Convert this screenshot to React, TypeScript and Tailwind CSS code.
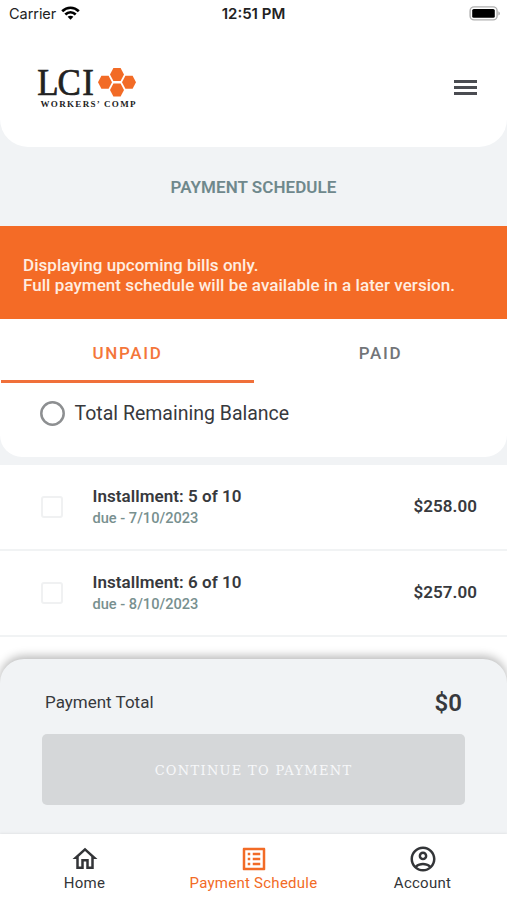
import React from 'react';

const rows = [
  { title: 'Installment: 5 of 10', due: 'due - 7/10/2023', amount: '$258.00' },
  { title: 'Installment: 6 of 10', due: 'due - 8/10/2023', amount: '$257.00' },
];

function StatusBar() {
  return (
    <div className="grid h-7 grid-cols-3 items-center px-[9px] font-[Inter,sans-serif] text-[14.5px] text-[#222]">
      <div className="flex items-center gap-[5px]">
        <span className="tracking-[-0.05px]">Carrier</span>
        <svg className="-mt-[2px]" width="19" height="15" viewBox="0 0 19 15" fill="none" stroke="#000" strokeWidth="2.7">
          <path d="M1.2 5.2C6 0.6 13 0.6 17.8 5.2" />
          <path d="M4.3 8.6C7.4 5.7 11.6 5.7 14.7 8.6" />
          <path d="M9.5 13.8L6.6 10.8C8.2 9.4 10.8 9.4 12.4 10.8Z" fill="#000" stroke="none" />
        </svg>
      </div>
      <div className="text-center text-[15px] font-semibold whitespace-nowrap">12:51 PM</div>
      <svg className="-mr-[3px] -mt-[2px] justify-self-end" width="32" height="15" viewBox="0 0 32 15">
        <rect x="1.1" y="0.9" width="27" height="13" rx="4" fill="#fff" stroke="#b0b0b0" strokeWidth="1.4" />
        <rect x="3.2" y="3" width="22.6" height="8.8" rx="1.6" fill="#000" />
        <path d="M29.4 5.2c2 .8 2 3.6 0 4.4z" fill="#aaa" />
      </svg>
    </div>
  );
}

function Logo() {
  const hex = '-7,0 -3.6,-6.5 3.6,-6.5 7,0 3.6,6.5 -3.6,6.5';
  return (
    <svg className="overflow-visible" width="102" height="44" viewBox="0 0 102 44">
      <g fill="#222" fontFamily="'Liberation Serif', serif">
        <text x="1.3 23.3 50.3" y="28.2" fontSize="38" stroke="#222" strokeWidth="0.7" transform="scale(0.92 1)">LCI</text>
        <text x="4.5" y="40" fontSize="9" fontWeight="700" textLength="95" lengthAdjust="spacing">WORKERS’ COMP</text>
      </g>
      <g fill="#f26b26">
        <polygon points={hex} transform="translate(81 7.5)" />
        <polygon points={hex} transform="translate(69 15.2)" />
        <polygon points={hex} transform="translate(93 15.2)" />
        <polygon points={hex} transform="translate(81 22.9)" />
      </g>
    </svg>
  );
}

function NavItem({ label, active, children }: { label: string; active?: boolean; children: React.ReactNode }) {
  return (
    <div className={`flex flex-1 flex-col items-center pt-[10px] ${active ? 'text-[#f26b26]' : 'text-[#333538]'}`}>
      <svg width="30" height="30" viewBox="0 0 24 24" fill="currentColor">{children}</svg>
      <span className="text-[15px] leading-[18px] tracking-[0.25px] whitespace-nowrap">{label}</span>
    </div>
  );
}

export default function App() {
  return (
    <div className="flex h-[900px] w-[507px] flex-col overflow-hidden bg-[#f1f3f5] font-[Roboto,sans-serif] text-[#37393d]">
      <header className="h-[147px] shrink-0 rounded-b-[28px] bg-white">
        <StatusBar />
        <div className="flex items-start justify-between pt-[39px] pr-[30px] pl-9">
          <Logo />
          <div className="mt-[13px] flex w-[23px] flex-col gap-[3px]">
            <div className="h-[3px] bg-[#4a4c51]" />
            <div className="h-[3px] bg-[#4a4c51]" />
            <div className="h-[3px] bg-[#4a4c51]" />
          </div>
        </div>
      </header>

      <h1 className="flex h-[79px] shrink-0 items-center justify-center pt-[2px] text-[17px] font-semibold tracking-[0.05px] text-[#6f888c]">PAYMENT SCHEDULE</h1>

      <div className="h-[93px] shrink-0 bg-[#f46b26] pt-[29px] pl-[23px] text-[17px] leading-5 font-medium tracking-[0.05px] whitespace-nowrap text-[#ffede0]">
        <p>Displaying upcoming bills only.</p>
        <p>Full payment schedule will be available in a later version.</p>
      </div>

      <section className="h-[138px] shrink-0 rounded-b-[22px] bg-white">
        <div className="flex h-16 text-[17px] font-medium tracking-[1.7px]">
          <div className="ml-[1px] flex w-[253px] items-center justify-center border-b-[3px] border-[#f0703a] pt-[9px] text-[#f4763a]">UNPAID</div>
          <div className="flex flex-1 items-center justify-center pt-[6px] text-[#727578]">PAID</div>
        </div>
        <div className="flex items-center pt-[18px] pl-10">
          <svg className="-mt-[1px]" width="25" height="25" viewBox="0 0 25 25">
            <circle cx="12.5" cy="12.5" r="11.2" fill="none" stroke="#8d8f91" strokeWidth="2.5" />
          </svg>
          <span className="ml-[9.5px] text-[19.5px] leading-[26px]">Total Remaining Balance</span>
        </div>
      </section>

      <main className="mt-2 h-[194px] shrink-0 bg-white">
        {rows.map((r) => (
          <div key={r.title} className="flex h-[86px] items-center border-b-2 border-[#f1f3f4] pr-[30px] pl-[41px]">
            <div className="size-[22px] rounded-[3px] border-2 border-[#f0f1f2]" />
            <div className="ml-[29.5px]">
              <div className="text-[17px] leading-[22px] font-semibold tracking-[0.05px]">{r.title}</div>
              <div className="text-[14.6px] leading-[22px] font-medium text-[#78908f]">{r.due}</div>
            </div>
            <div className="ml-auto text-[17px] font-semibold tracking-[0.05px]">{r.amount}</div>
          </div>
        ))}
      </main>

      <section className="h-[175px] shrink-0 bg-white">
        <div className="h-full rounded-t-[24px] bg-[#f1f3f5] px-[42px] shadow-[0_-3px_10px_rgba(0,0,0,0.28)]">
          <div className="flex h-[75px] items-center justify-between pt-3 pr-[3px] pl-[3px]">
            <span className="text-[17px]">Payment Total</span>
            <span className="text-[24px] font-semibold">$0</span>
          </div>
          <button className="flex h-[71px] w-full items-center justify-center rounded-[5px] bg-[#d5d7d9] pt-[2px] font-['DejaVu_Serif',serif] text-[13px] tracking-[1.3px] text-[#f7f8f9]">CONTINUE TO PAYMENT</button>
        </div>
      </section>

      <nav className="relative flex h-[66px] shrink-0 bg-white shadow-[0_-1px_2px_rgba(0,0,0,0.06)]">
        <NavItem label="Home">
          <path d="M12 5.69l5 4.5V18h-2v-6H9v6H7v-7.81l5-4.5M12 3L2 12h3v8h6v-6h2v6h6v-8h3L12 3z" />
        </NavItem>
        <NavItem label="Payment Schedule" active>
          <path d="M11 7h6v2h-6zm0 4h6v2h-6zm0 4h6v2h-6zM7 7h2v2H7zm0 4h2v2H7zm0 4h2v2H7zM20.1 3H3.9c-.5 0-.9.4-.9.9v16.2c0 .4.4.9.9.9h16.2c.4 0 .9-.5.9-.9V3.9c0-.5-.5-.9-.9-.9zM19 19H5V5h14v14z" />
        </NavItem>
        <NavItem label="Account">
          <path d="M12 2C6.48 2 2 6.48 2 12s4.48 10 10 10 10-4.48 10-10S17.52 2 12 2zM7.35 18.5C8.66 17.56 10.26 17 12 17s3.34.56 4.65 1.5c-1.31.94-2.91 1.5-4.65 1.5s-3.34-.56-4.65-1.5zm10.79-1.38C16.45 15.8 14.32 15 12 15s-4.45.8-6.14 2.12C4.7 15.73 4 13.95 4 12c0-4.42 3.58-8 8-8s8 3.58 8 8c0 1.95-.7 3.73-1.86 5.12z" />
          <path d="M12 6c-1.93 0-3.5 1.57-3.5 3.5S10.07 13 12 13s3.5-1.57 3.5-3.5S13.93 6 12 6zm0 5c-.83 0-1.5-.67-1.5-1.5S11.17 8 12 8s1.5.67 1.5 1.5S12.83 11 12 11z" />
        </NavItem>
      </nav>
    </div>
  );
}
